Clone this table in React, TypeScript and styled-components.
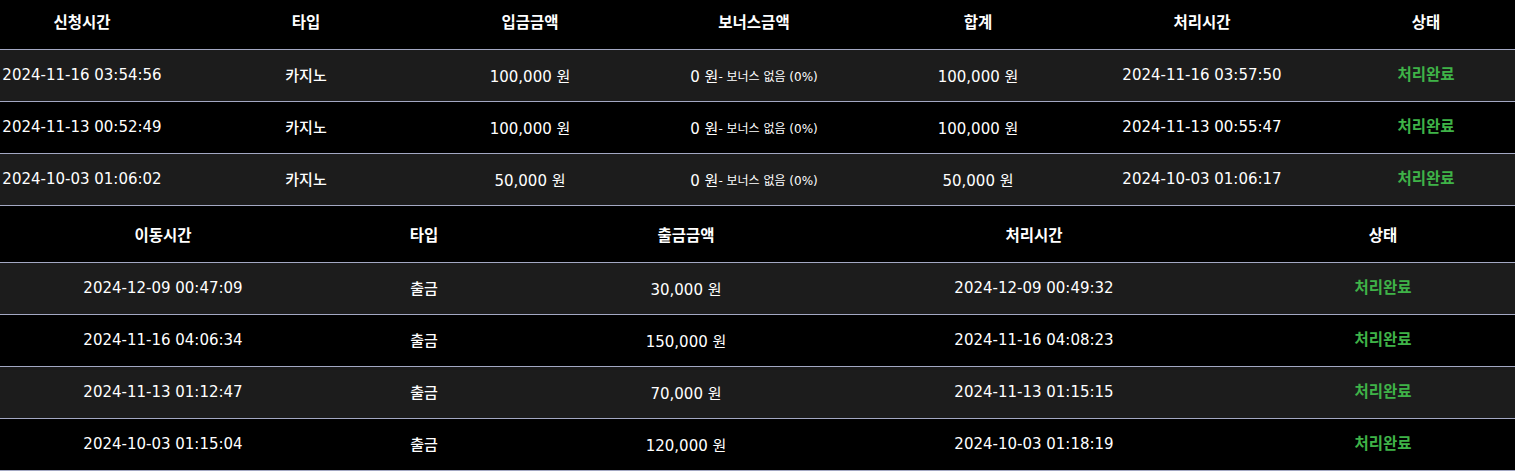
import styled, { createGlobalStyle } from 'styled-components'

const GlobalStyle = createGlobalStyle`
  html, body {
    margin: 0;
    padding: 0;
    background: #000000;
    overflow: hidden;
  }
  body {
    font-family: "DejaVu Sans", "Noto Sans CJK KR", sans-serif;
    color: #ffffff;
  }
`

const Page = styled.div`
  margin-top: -7px;
  display: flex;
  flex-direction: column;
`

const Table = styled.div<{ $cols: string; $shift: number }>`
  display: grid;
  grid-template-columns: ${(p) => p.$cols};
  margin-left: ${(p) => p.$shift}px;
`

const HeadCell = styled.div`
  height: 56px;
  display: flex;
  align-items: center;
  justify-content: center;
  background: #000000;
  border-bottom: 1px solid #a3a8c3;
  font-family: "Noto Sans CJK KR", sans-serif;
  font-size: 15.5px;
  font-weight: 700;
  white-space: nowrap;
`

const Cell = styled.div<{ $striped: boolean }>`
  height: 50px;
  padding-bottom: 1px;
  display: flex;
  align-items: center;
  justify-content: center;
  background: ${(p) => (p.$striped ? '#1c1c1c' : '#000000')};
  border-bottom: 1px solid #a3a8c3;
  font-size: 15px;
  white-space: nowrap;
`

const Korean = styled.span`
  font-family: "Noto Sans CJK KR", sans-serif;
  font-size: 15px;
  font-weight: 500;
  line-height: 1;
  margin-top: -2px;
`

const Status = styled.span`
  color: #3fb348;
  font-family: "Noto Sans CJK KR", sans-serif;
  font-weight: 700;
  font-size: 15.5px;
  line-height: 1;
  margin-top: -3px;
`

const Note = styled.span`
  font-size: 12px;
`

const deposits = [
  ['2024-11-16 03:54:56', '100,000', '100,000', '2024-11-16 03:57:50'],
  ['2024-11-13 00:52:49', '100,000', '100,000', '2024-11-13 00:55:47'],
  ['2024-10-03 01:06:02', '50,000', '50,000', '2024-10-03 01:06:17'],
]

const withdrawals = [
  ['2024-12-09 00:47:09', '30,000', '2024-12-09 00:49:32'],
  ['2024-11-16 04:06:34', '150,000', '2024-11-16 04:08:23'],
  ['2024-11-13 01:12:47', '70,000', '2024-11-13 01:15:15'],
  ['2024-10-03 01:15:04', '120,000', '2024-10-03 01:18:19'],
]

export default function App() {
  return (
    <>
      <GlobalStyle />
      <Page>
        <Table $cols="repeat(7, 224px)" $shift={-30}>
          {['신청시간', '타입', '입금금액', '보너스금액', '합계', '처리시간', '상태'].map((h) => (
            <HeadCell key={h}>{h}</HeadCell>
          ))}
          {deposits.map((r, i) => {
            const s = i % 2 === 0
            return [
              <Cell $striped={s} key={i + 'a'}>{r[0]}</Cell>,
              <Cell $striped={s} key={i + 'b'}><Korean>카지노</Korean></Cell>,
              <Cell $striped={s} key={i + 'c'}>{r[1]} 원</Cell>,
              <Cell $striped={s} key={i + 'd'}>
                0 원<Note>- 보너스 없음 (0%)</Note>
              </Cell>,
              <Cell $striped={s} key={i + 'e'}>{r[2]} 원</Cell>,
              <Cell $striped={s} key={i + 'f'}>{r[3]}</Cell>,
              <Cell $striped={s} key={i + 'g'}>
                <Status>처리완료</Status>
              </Cell>,
            ]
          })}
        </Table>
        <Table $cols="326px 196px 328px 368px 330px" $shift={0}>
          {['이동시간', '타입', '출금금액', '처리시간', '상태'].map((h) => (
            <HeadCell key={h}>{h}</HeadCell>
          ))}
          {withdrawals.map((r, i) => {
            const s = i % 2 === 0
            return [
              <Cell $striped={s} key={i + 'a'}>{r[0]}</Cell>,
              <Cell $striped={s} key={i + 'b'}><Korean>출금</Korean></Cell>,
              <Cell $striped={s} key={i + 'c'}>{r[1]} 원</Cell>,
              <Cell $striped={s} key={i + 'd'}>{r[2]}</Cell>,
              <Cell $striped={s} key={i + 'e'}>
                <Status>처리완료</Status>
              </Cell>,
            ]
          })}
        </Table>
      </Page>
    </>
  )
}
